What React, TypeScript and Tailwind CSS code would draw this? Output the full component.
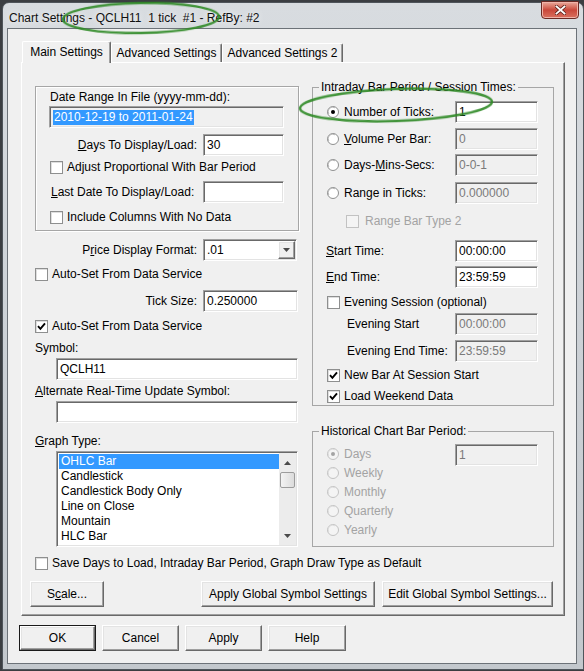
import type { ReactNode } from "react";

// classic 3D edges
const SUNKEN =
  "border border-t-[#a0a0a0] border-l-[#a0a0a0] border-r-white border-b-white shadow-[inset_1px_1px_0_#696969,inset_-1px_-1px_0_#e3e3e3]";
const RAISED =
  "border border-t-white border-l-white border-r-[#696969] border-b-[#696969] shadow-[inset_-1px_-1px_0_#a0a0a0,inset_1px_1px_0_#e3e3e3]";

const GRAPH_TYPES = ["OHLC Bar", "Candlestick", "Candlestick Body Only", "Line on Close", "Mountain", "HLC Bar"];

function Field({ value, w, disabled, selected }: { value?: string; w: string; disabled?: boolean; selected?: boolean }) {
  return (
    <div
      className={`h-[22px] shrink-0 flex items-center pl-[3px] ${w} ${SUNKEN} ${
        disabled ? "bg-[#f0f0f0] text-[#7a7a7a]" : selected ? "bg-[#f0f0f0]" : "bg-white"
      }`}
    >
      {selected ? <span className="bg-[#3399ff] text-white leading-[15px] px-[1px]">{value}</span> : value}
    </div>
  );
}

function CheckBox({ checked, disabled }: { checked?: boolean; disabled?: boolean }) {
  return (
    <span
      className={`w-[13px] h-[13px] shrink-0 flex items-center justify-center border ${
        disabled ? "border-[#c2c2c2] bg-[#f4f4f4]" : "border-[#8e8f8f] bg-white shadow-[inset_1px_1px_0_#dedede]"
      }`}
    >
      {checked && (
        <svg width="9" height="9" viewBox="0 0 9 9">
          <path d="M1 4.2 L3.4 6.8 L8 1.4" fill="none" stroke="#000" strokeWidth="1.9" />
        </svg>
      )}
    </span>
  );
}

function Radio({ checked, disabled }: { checked?: boolean; disabled?: boolean }) {
  return (
    <svg width="12" height="12" viewBox="0 0 12 12" className="shrink-0">
      <circle cx="6" cy="6" r="5.5" fill={disabled ? "#f4f4f4" : "#fff"} stroke={disabled ? "#c2c2c2" : "#8e8f8f"} />
      <path d="M1.8 8 A4.5 4.5 0 0 1 8 1.8" fill="none" stroke={disabled ? "#dcdcdc" : "#b5b5b5"} />
      {checked && <circle cx="6" cy="6" r="2" fill={disabled ? "#a3a3a3" : "#000"} />}
    </svg>
  );
}

function CheckRow({ label, checked, disabled, className = "" }: { label: ReactNode; checked?: boolean; disabled?: boolean; className?: string }) {
  return (
    <div className={`h-[14px] flex items-center gap-[4px] ${className}`}>
      <CheckBox checked={checked} disabled={disabled} />
      <span className={disabled ? "text-[#a3a3a3]" : ""}>{label}</span>
    </div>
  );
}

function Button({ children, w, isDefault }: { children: ReactNode; w: string; isDefault?: boolean }) {
  const face = (
    <div className={`h-full w-full flex items-center justify-center bg-[#f0f0f0] ${RAISED}`}>{children}</div>
  );
  return isDefault ? (
    <div className={`h-[26px] shrink-0 border border-[#1a1a1a] ${w}`}>{face}</div>
  ) : (
    <div className={`h-[26px] shrink-0 ${w}`}>{face}</div>
  );
}

function Arrow({ up }: { up?: boolean }) {
  return (
    <svg width="7" height="4" viewBox="0 0 7 4">
      <path d={up ? "M0 4 L3.5 0 L7 4 Z" : "M0 0 L7 0 L3.5 4 Z"} fill="#4a4a4a" />
    </svg>
  );
}

function LeftColumn() {
  return (
    <div className="w-[264px] pt-[6px] flex flex-col">
      <div className="h-[145px] border border-[#a6a6a6] shadow-[inset_1px_1px_0_#fff,1px_1px_0_#fff] flex flex-col pl-[14px]">
        <div className="mt-[3px] h-[14px] leading-[14px]">Date Range In File (yyyy-mm-dd):</div>
        <div className="mt-[2px] -ml-[1px]">
          <Field w="w-[235px]" value="2010-12-19 to 2011-01-24" selected />
        </div>
        <div className="mt-[6px] w-[234px] h-[22px] flex items-center">
          <span className="flex-1 text-right pr-[6px]">
            <u>D</u>ays To Display/Load:
          </span>
          <Field w="w-[81px]" value="30" />
        </div>
        <CheckRow className="mt-[4px]" label="Adjust Proportional With Bar Period" />
        <div className="mt-[7px] w-[234px] h-[22px] flex items-center">
          <span className="flex-1 pl-[1px]">
            <u>L</u>ast Date To Display/Load:
          </span>
          <Field w="w-[81px]" />
        </div>
        <CheckRow className="mt-[7px]" label="Include Columns With No Data" />
      </div>

      <div className="mt-[8px] h-[22px] flex items-center">
        <span className="w-[168px] text-right pr-[6px]">
          P<u>r</u>ice Display Format:
        </span>
        <div className={`w-[94px] h-[22px] flex items-center bg-white ${SUNKEN}`}>
          <span className="flex-1 pl-[3px]">.01</span>
          <span className={`w-[17px] h-[18px] mr-[1px] flex items-center justify-center bg-[#f0f0f0] ${RAISED}`}>
            <Arrow />
          </span>
        </div>
      </div>
      <CheckRow className="mt-[6px]" label="Auto-Set From Data Service" />
      <div className="mt-[9px] h-[22px] flex items-center">
        <span className="w-[168px] text-right pr-[6px]">Tick Size:</span>
        <Field w="w-[95px]" value="0.250000" />
      </div>
      <CheckRow className="mt-[7px]" label="Auto-Set From Data Service" checked />
      <div className="mt-[8px] h-[14px] leading-[14px]">Symbol:</div>
      <div className="mt-[3px] ml-[21px]">
        <Field w="w-[242px]" value="QCLH11" />
      </div>
      <div className="mt-[4px] h-[14px] leading-[14px]">
        <u>A</u>lternate Real-Time Update Symbol:
      </div>
      <div className="mt-[3px] ml-[21px]">
        <Field w="w-[242px]" />
      </div>
      <div className="mt-[11px] h-[14px] leading-[14px]">
        <u>G</u>raph Type:
      </div>
      <div className={`mt-[3px] ml-[21px] w-[242px] h-[96px] bg-white flex p-[1px] ${SUNKEN}`}>
        <div className="flex-1 flex flex-col pl-[1px] pt-[1px]">
          {GRAPH_TYPES.map((t, i) => (
            <div key={t} className={`h-[15px] leading-[15px] pl-[2px] ${i === 0 ? "bg-[#3399ff] text-white" : ""}`}>
              {t}
            </div>
          ))}
        </div>
        <div className="w-[17px] flex flex-col bg-[#ececec] pt-[1px] pb-[1px]">
          <div className="h-[17px] flex items-center justify-center">
            <Arrow up />
          </div>
          <div className="h-[16px] mx-[1px] mt-[1px] rounded-[2px] border border-[#9c9c9c] bg-gradient-to-r from-[#f3f3f3] to-[#dcdcdc]" />
          <div className="flex-1" />
          <div className="h-[17px] flex items-center justify-center">
            <Arrow />
          </div>
        </div>
      </div>
    </div>
  );
}

function ValueRow({ label, value, disabled, className = "" }: { label: ReactNode; value: string; disabled?: boolean; className?: string }) {
  return (
    <div className={`h-[22px] flex items-center pr-[15px] ${className}`}>
      <span className="flex-1">{label}</span>
      <Field w="w-[83px]" value={value} disabled={disabled} />
    </div>
  );
}

function RadioRow({ label, value, checked, disabled, className = "" }: { label: ReactNode; value: string; checked?: boolean; disabled?: boolean; className?: string }) {
  return (
    <div className={`h-[22px] flex items-center pl-[14px] pr-[15px] ${className}`}>
      <Radio checked={checked} />
      <span className="flex-1 ml-[5px]">{label}</span>
      <Field w="w-[83px]" value={value} disabled={disabled} />
    </div>
  );
}

function RightColumn() {
  return (
    <div className="ml-[13px] w-[242px] flex flex-col">
      <fieldset className="border border-[#a6a6a6] flex flex-col pb-[2px]">
        <legend className="ml-[6px] px-[2px] leading-[14px]">Intraday Bar Period / Session Times:</legend>
        <RadioRow className="mt-[7px]" label="Number of Ticks:" value="1" checked />
        <RadioRow className="mt-[5px]" label={<><u>V</u>olume Per Bar:</>} value="0" disabled />
        <RadioRow className="mt-[4px]" label={<>Days-<u>M</u>ins-Secs:</>} value="0-0-1" disabled />
        <RadioRow className="mt-[6px]" label="Range in Ticks:" value="0.000000" disabled />
        <div className="mt-[10px] h-[14px] flex items-center gap-[6px] pl-[33px]">
          <CheckBox disabled />
          <span className="text-[#a3a3a3]">Range Bar Type 2</span>
        </div>
        <ValueRow className="mt-[12px] pl-[13px]" label={<><u>S</u>tart Time:</>} value="00:00:00" />
        <ValueRow className="mt-[4px] pl-[13px]" label={<><u>E</u>nd Time:</>} value="23:59:59" />
        <CheckRow className="mt-[7px] pl-[14px]" label="Evening Session (optional)" />
        <ValueRow className="mt-[4px] pl-[34px]" label="Evening Start" value="00:00:00" disabled />
        <ValueRow className="mt-[5px] pl-[34px]" label="Evening End Time:" value="23:59:59" disabled />
        <CheckRow className="mt-[6px] pl-[14px]" label="New Bar At Session Start" checked />
        <CheckRow className="mt-[7px] pl-[14px]" label="Load Weekend Data" checked />
      </fieldset>

      <fieldset className="mt-[18px] border border-[#a6a6a6] pb-[7px]">
        <legend className="ml-[6px] px-[2px] leading-[14px]">Historical Chart Bar Period:</legend>
        <div className="mt-[6px] flex pl-[14px] pr-[15px]">
          <div className="flex-1 flex flex-col">
            {["Days", "Weekly", "Monthly", "Quarterly", "Yearly"].map((p, i) => (
              <div key={p} className="h-[19px] flex items-center gap-[5px] text-[#a3a3a3]">
                <Radio disabled checked={i === 0} />
                <span>{p}</span>
              </div>
            ))}
          </div>
          <Field w="w-[83px]" value="1" disabled />
        </div>
      </fieldset>
    </div>
  );
}

export default function App() {
  return (
    <div className="relative w-[584px] h-[671px] overflow-hidden bg-[#3b3e42] text-[12px] leading-[14px] text-black font-['Liberation_Sans',Arial,sans-serif]">
      <div className="ml-[2px] mt-[2px] w-[582px] h-[668px] rounded-t-[7px] border border-[#4f555b] bg-gradient-to-b from-[#d8dce0] via-[#ccd1d6] to-[#c3c8cd] flex flex-col">
        {/* title bar */}
        <div className="h-[25px] flex items-start">
          <span className="pl-[6px] pt-[8px] text-[12px] leading-[14px] text-[#101010] [text-shadow:0_0_6px_#fff]">
            Chart Settings - QCLH11&nbsp; 1 tick&nbsp; #1 - RefBy: #2
          </span>
          <div className="ml-auto mr-[4px] -mt-[2px] w-[38px] h-[18px] rounded-b-[4px] border border-[#6b2a24] bg-gradient-to-b from-[#e9a99c] via-[#c9473a] to-[#d9705f] flex items-center justify-center shadow-[inset_0_0_0_1px_#f0b3a8]">
            <svg width="11" height="10" viewBox="0 0 11 10">
              <path d="M1.5 1.5 L9.5 8.5 M9.5 1.5 L1.5 8.5" stroke="#5b2019" strokeWidth="3.4" strokeLinecap="square" />
              <path d="M1.5 1.5 L9.5 8.5 M9.5 1.5 L1.5 8.5" stroke="#fff" strokeWidth="1.9" strokeLinecap="square" />
            </svg>
          </div>
        </div>

        {/* client area */}
        <div className="ml-[4px] w-[570px] h-[636px] border border-[#6c7278] bg-[#f0f0f0] flex flex-col">
          <div className="relative z-10 mt-[12px] ml-[14px] h-[21px] flex items-end">
            <div className="self-end -mb-[1px] w-[89px] h-[22px] rounded-t-[2px] bg-[#f0f0f0] border border-b-0 border-t-white border-l-white border-r-[#696969] shadow-[inset_-1px_0_0_#a0a0a0] flex items-center justify-center pb-[1px]">
              Main Settings
            </div>
            <div className="w-[111px] h-[19px] rounded-t-[2px] border border-b-0 border-t-white border-l-white border-r-[#696969] shadow-[inset_-1px_0_0_#a0a0a0] flex items-center justify-center">
              Advanced Settings
            </div>
            <div className="w-[121px] h-[19px] rounded-t-[2px] border border-b-0 border-t-white border-l-white border-r-[#696969] shadow-[inset_-1px_0_0_#a0a0a0] flex items-center justify-center">
              Advanced Settings 2
            </div>
          </div>

          <div className={`ml-[13px] w-[544px] h-[554px] flex flex-col ${RAISED} shadow-[inset_-1px_-1px_0_#a0a0a0]`}>
            <div className="mt-[17px] ml-[13px] flex items-start">
              <LeftColumn />
              <RightColumn />
            </div>
            <CheckRow className="mt-[9px] ml-[13px]" label="Save Days to Load, Intraday Bar Period, Graph Draw Type as Default" />
            <div className="mt-[11px] ml-[8px] flex">
              <Button w="w-[74px]">
                S<u>c</u>ale...
              </Button>
              <div className="ml-[97px]">
                <Button w="w-[174px]">Apply Global Symbol Settings</Button>
              </div>
              <div className="ml-[7px]">
                <Button w="w-[171px]">Edit Global Symbol Settings...</Button>
              </div>
            </div>
          </div>

          <div className="mt-[9px] ml-[11px] flex gap-[6px]">
            <Button w="w-[77px]" isDefault>
              OK
            </Button>
            <Button w="w-[77px]">Cancel</Button>
            <Button w="w-[77px]">Apply</Button>
            <Button w="w-[78px]">Help</Button>
          </div>
        </div>
      </div>

      {/* hand-drawn highlight rings */}
      <svg className="absolute inset-0 pointer-events-none" width="584" height="671">
        <g fill="none" stroke="#2f8a26" strokeWidth="2.5" opacity="0.9">
          <ellipse cx="141" cy="18" rx="78" ry="15" transform="rotate(-1 141 18)" />
          <ellipse cx="396" cy="105" rx="96" ry="16" transform="rotate(-2 396 105)" />
        </g>
      </svg>
    </div>
  );
}
